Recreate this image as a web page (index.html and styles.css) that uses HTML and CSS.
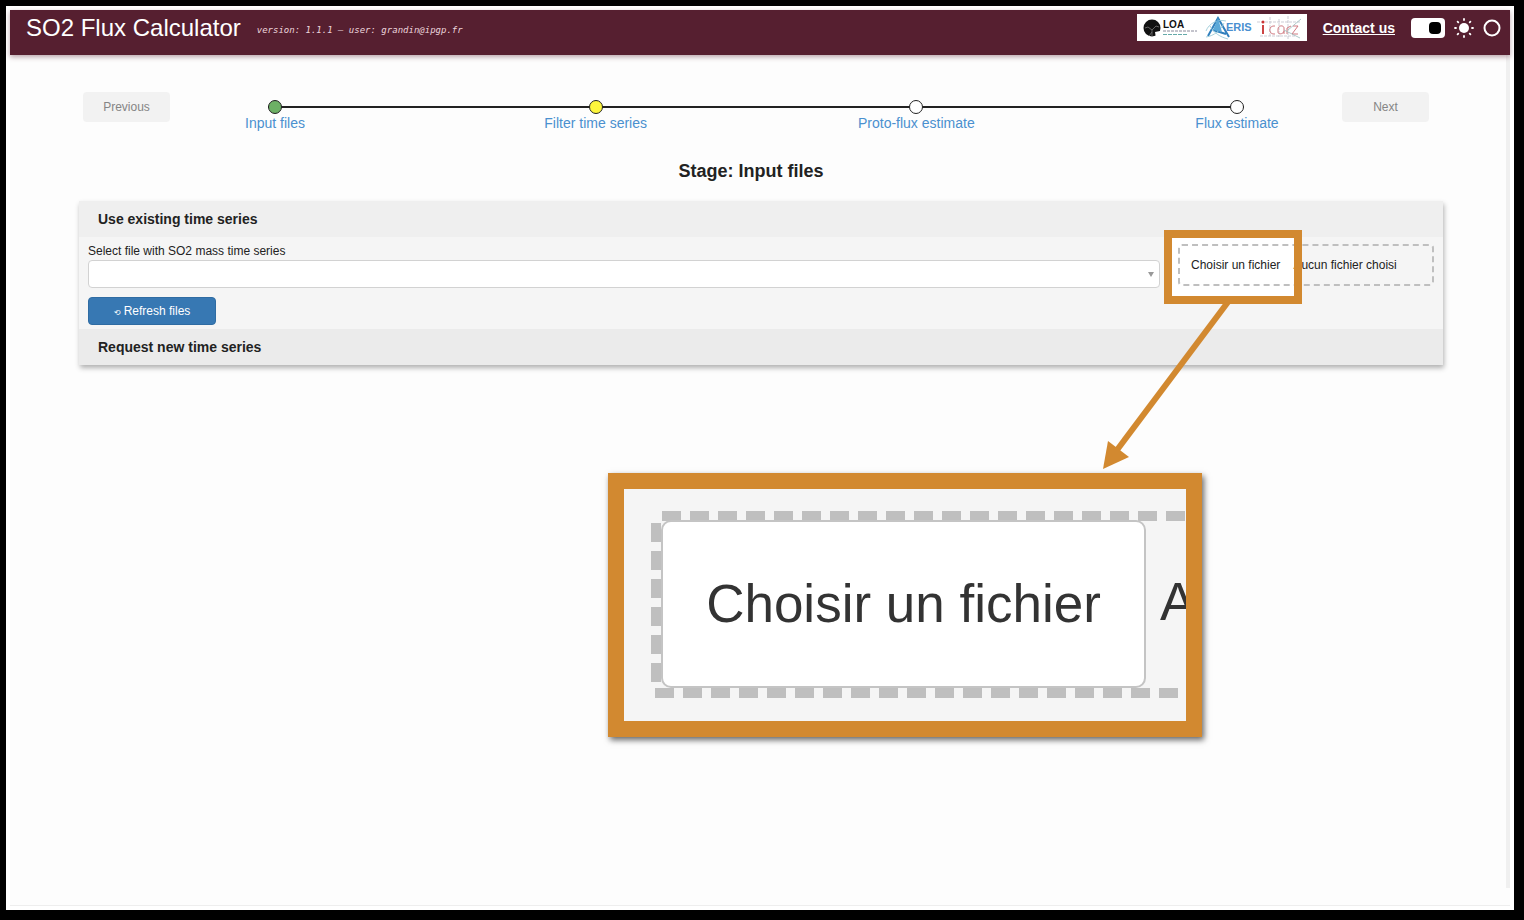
FILE: index.html
```
<!DOCTYPE html>
<html lang="en">
<head>
    <meta charset="utf-8">
    <title>SO2 Flux Calculator</title>
    <link rel="stylesheet" href="styles.css">
</head>
<body>
    <div class="window">
        <header class="topbar">
            <h1>SO2 Flux Calculator</h1>
            <span class="version">version: 1.1.1 – user: grandin@ipgp.fr</span>
            <svg class="logos" width="170" height="27" viewBox="0 0 170 27" role="img" aria-label="LOA, AERIS, ICARE">
                <rect width="170" height="28" fill="#fff"/>
                <circle cx="15" cy="14" r="8.5" fill="#111"/>
                <path d="M15 22v-6l-4-3M15 16l4-4 3 1M11 13l-3 1M12 22l3-4" stroke="#777" stroke-width="0.800" fill="none"/>
                <path d="M18 18l5-1 1 5-5 2z" fill="#fff"/>
                <text x="26" y="14" class="loa">LOA</text>
                <path d="M26 17h34" stroke="#889" stroke-dasharray="3 1"/>
                <path d="M26 20.500h24" stroke="#6aa" stroke-dasharray="4 1"/>
                <path d="M71 22L81 4l11 19M76 16l13 4" stroke="#2f7fbd" stroke-width="2" fill="none"/>
                <path d="M69 17c3-8 12-12 20-10M69 23c8-1 15-7 18-14M73 12c4 7 10 11 18 13" stroke="#9ccbd8" stroke-width="0.900" fill="none"/>
                <path d="M81 4l-5 12 9 2z" fill="#5aa9d8"/>
                <text x="89" y="17" class="aeris">ERIS</text>
                <path d="M120 8h44M133 3v20M142 5v18M151 2v24M123 22h35" stroke="#b8b8c4" stroke-width="0.700" stroke-dasharray="3 1"/>
                <circle cx="126" cy="8" r="1.500" fill="#c33"/>
                <path d="M126 11v9" stroke="#c44" stroke-width="2"/>
                <path d="M138 12c-7-1-7 9 0 8M147 20v-6c0-3-6-3-6 1v3c0 3 6 2 6-1M150 20v-6l4-2M156 12h5l-6 8h6" stroke="#d07880" fill="none"/>
                <path d="M147 16l16 8M164 5l-13 11" stroke="#9bb" stroke-width="0.800"/>
            </svg>
            <a class="contact" href="#">Contact us</a>
            <div class="theme">
                <input type="checkbox" class="switch" aria-label="Toggle theme" checked>
                <svg width="20" height="20" viewBox="0 0 20 20" aria-hidden="true">
                    <circle cx="10" cy="10" r="5" fill="#fff"/>
                    <path d="M10 1v1M10 18v1M1 10h1M18 10h1M3.600 3.600l.7.700M15.700 15.700l.7.700M3.600 16.400l.7-.7M15.700 4.300l.7-.7" stroke="#fff" stroke-width="1.800" stroke-linecap="round"/>
                </svg>
                <svg width="18" height="18" viewBox="0 0 18 18" aria-hidden="true">
                    <circle cx="9" cy="9" r="7.500" fill="none" stroke="#fff" stroke-width="2"/>
                </svg>
            </div>
        </header>

        <main>
            <nav class="stages">
                <button type="button" class="step-btn" disabled>Previous</button>
                <ol class="stepper">
                    <li class="done"><a href="#">Input files</a></li>
                    <li class="current"><a href="#">Filter time series</a></li>
                    <li><a href="#">Proto-flux estimate</a></li>
                    <li><a href="#">Flux estimate</a></li>
                </ol>
                <button type="button" class="step-btn" disabled>Next</button>
            </nav>

            <h2>Stage: Input files</h2>

            <section class="accordion">
                <h3>Use existing time series</h3>
                <div class="panel">
                    <div class="chooser">
                        <label for="series">Select file with SO2 mass time series</label>
                        <div class="select-wrap">
                            <select id="series">
                                <option value=""></option>
                            </select>
                        </div>
                        <button type="button" class="refresh"><span class="glyph">⟲</span> Refresh files</button>
                    </div>
                    <div class="upload">
                        <div class="dropzone">
                            <input type="file" id="upload">
                            <label for="upload">Choisir un fichier</label>
                            <span>Aucun fichier choisi</span>
                        </div>

                        <!-- callout: frame, arrow and enlarged button -->
                        <div class="frame"></div>
                        <svg class="arrow" width="128" height="168" viewBox="0 0 128 168" aria-hidden="true">
                            <path d="M125 0L14 148" stroke="#d28930" stroke-width="6"/>
                            <path d="M0 167L5 139l21 16z" fill="#d28930"/>
                        </svg>
                        <div class="magnifier">
                            <svg width="562" height="232" viewBox="0 0 562 232" aria-hidden="true">
                                <g stroke="#bfbfbf" stroke-width="10" stroke-dasharray="19 9">
                                    <path d="M38 27h530"/>
                                    <path d="M32 34v165"/>
                                    <path d="M31 204h530"/>
                                </g>
                            </svg>
                            <span class="big-button">Choisir un fichier</span>
                            <span class="big-rest">A</span>
                        </div>
                    </div>
                </div>
                <h3 class="closed">Request new time series</h3>
            </section>
        </main>
    </div>
</body>
</html>
```
FILE: styles.css
```
*, *::before {
    box-sizing: border-box;
}
body {
    margin: 0;
    padding: 6px 10px 10px 6px;
    min-height: 100vh;
    display: flex;
    background: #000;
    color: #222;
    font-family: "Liberation Sans", Arial, sans-serif;
    font-size: 12px;
}
button, select, input {
    font: inherit;
}
h1, h2, h3 {
    margin: 0;
}
.window {
    flex: 1;
    display: flex;
    flex-direction: column;
    padding: 4px;
    background: #fff;
}

/* header */
.topbar {
    display: flex;
    align-items: center;
    height: 45px;
    padding: 0 9px 10px 16px;
    background: #561f30;
    color: #fff;
    box-shadow: 0 2px 5px rgba(86,31,48,0.4);
    z-index: 1;
}
h1 {
    font-size: 24px;
    font-weight: normal;
}
.version {
    margin: 4px auto 0 16px;
    font-family: "DejaVu Sans Mono", monospace;
    font-size: 9px;
    font-style: italic;
    color: #ecd5dc;
}
.loa {
    font-size: 10px;
    font-weight: bold;
    fill: #111;
}
.aeris {
    font-size: 11px;
    font-weight: bold;
    fill: #4a8fd0;
}
.contact {
    margin: 0 16px;
    color: #fff;
    font-size: 14px;
    font-weight: bold;
}
.theme {
    display: flex;
    align-items: center;
    gap: 9px;
}
.switch {
    appearance: none;
    display: flex;
    justify-content: flex-end;
    align-items: center;
    width: 34px;
    height: 20px;
    margin: 0;
    padding: 0 4px;
    border-radius: 4px;
    background: #fff;
}
.switch::before {
    content: "";
    width: 12px;
    height: 12px;
    border-radius: 4px;
    background: #000;
}

main {
    flex: 1;
    padding: 37px 67px 0 69px;
    border-bottom: 1px solid #eee;
    background: linear-gradient(#f0f0f0, #f0f0f0) no-repeat right top / 4px 98% #fdfdfd;
}

/* stage navigation */
.stages {
    display: flex;
    padding: 0 14px 0 4px;
}
.step-btn {
    width: 87px;
    height: 30px;
    border: 0;
    border-radius: 4px;
    background: #f2f2f2;
    color: #858585;
}
.stepper {
    flex: 1;
    display: flex;
    justify-content: space-between;
    margin: 8px 98px 0;
    padding: 0;
    list-style: none;
    background: linear-gradient(#222, #222) no-repeat 0 6px / 100% 2px;
}
.stepper li {
    display: flex;
    flex-direction: column;
    align-items: center;
    width: 14px;
    white-space: nowrap;
}
.stepper li::before {
    content: "";
    width: 14px;
    height: 14px;
    flex: none;
    border: 1px solid #222;
    border-radius: 50%;
    background: #fff;
}
.stepper .done::before {
    background: #6db065;
}
.stepper .current::before {
    background: #fdf63c;
}
.stepper a {
    color: #4a90cf;
    font-size: 14px;
    line-height: 18px;
    text-decoration: none;
}
h2 {
    margin: 29px 0 20px;
    padding-right: 20px;
    font-size: 18px;
    line-height: 20px;
    text-align: center;
}

/* accordion */
.accordion {
    background: #f5f5f5;
    box-shadow: 1px 3px 5px rgba(0,0,0,0.3);
}
h3 {
    padding-left: 19px;
    background: #efefef;
    font-size: 14px;
    line-height: 36px;
}
.closed {
    background: #ebebeb;
}
.panel {
    display: flex;
    align-items: flex-start;
    gap: 12px;
    padding: 0 9px 4px;
}
.chooser {
    flex: 1;
    padding-top: 5px;
}
.chooser label {
    display: block;
    line-height: 18px;
}
.select-wrap {
    position: relative;
}
.select-wrap::after {
    content: "";
    position: absolute;
    right: 6px;
    top: 12px;
    border: 3px solid transparent;
    border-top: 5px solid #999;
    border-bottom: 0;
}
select {
    display: block;
    appearance: none;
    width: 100%;
    height: 28px;
    border: 1px solid #d2d2d2;
    border-radius: 4px;
    background: #fff;
}
.refresh {
    width: 128px;
    height: 28px;
    margin-top: 9px;
    border: 1px solid #2f6ca3;
    border-radius: 4px;
    background: #3778b3;
    color: #fff;
}
.glyph {
    font-family: "DejaVu Sans", sans-serif;
    font-size: 8px;
}
.upload {
    position: relative;
    width: 262px;
    margin-top: 1px;
    padding: 6px 0 10px 6px;
    background: linear-gradient(#fff, #fff) no-repeat 0 0 / 122px 100%;
}
.dropzone {
    display: flex;
    align-items: center;
    height: 42px;
    border: 2px dashed #bfbfbf;
    border-radius: 4px;
    line-height: 38px;
}
.dropzone input {
    position: absolute;
    width: 116px;
    opacity: 0;
}
.dropzone label {
    padding: 0 11px;
}
.dropzone span {
    padding-left: 2px;
}

/* callout */
.frame {
    position: absolute;
    inset: -8px auto -8px -8px;
    width: 138px;
    border: 8px solid #d28930;
}
.arrow {
    position: absolute;
    left: -69px;
    top: 64px;
}
.magnifier {
    position: absolute;
    left: -564px;
    top: 235px;
    width: 594px;
    border: 16px solid #d28930;
    background: #f5f5f5;
    box-shadow: 2px 3px 6px rgba(0,0,0,0.6);
    color: #333;
    font-size: 53px;
    line-height: 164px;
    white-space: nowrap;
    overflow: hidden;
}
.magnifier svg {
    display: block;
}
.big-button {
    position: absolute;
    left: 37px;
    top: 31px;
    width: 485px;
    border: 2px solid #c4c4c4;
    border-radius: 10px;
    background: #fff;
    text-align: center;
}
.big-rest {
    position: absolute;
    left: 536px;
    top: 31px;
}
```
